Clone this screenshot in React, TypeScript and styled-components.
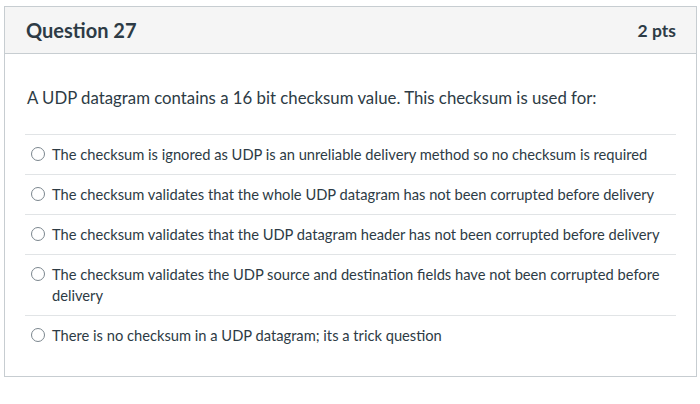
import React from 'react'
import styled, { createGlobalStyle } from 'styled-components'

const GlobalStyle = createGlobalStyle`
  html, body {
    margin: 0;
    padding: 0;
    background: #fff;
  }
  body {
    font-family: Lato, "Open Sans", sans-serif;
    color: #2d3b45;
  }
`

const Page = styled.div`
  padding: 6px 2px 0 4px;
`

const Card = styled.div`
  width: 693px;
  height: 371px;
  border: 1px solid #c7cdd1;
  box-sizing: border-box;
  overflow: hidden;
`

const Header = styled.div`
  display: flex;
  justify-content: space-between;
  align-items: center;
  height: 47px;
  padding: 0 20px 0 21px;
  background: #f5f5f5;
  border-bottom: 1px solid #c7cdd1;
  box-sizing: border-box;

  h2 {
    margin: 0;
    font-size: 20px;
    font-weight: 700;
  }

  span {
    font-size: 17.5px;
    font-weight: 700;
  }
`

const Body = styled.div`
  padding: 32px 20px 0 20px;
`

const QuestionText = styled.p`
  margin: 0 0 24px 2px;
  font-size: 16.8px;
  line-height: 24px;
`

const Answers = styled.ul`
  list-style: none;
  margin: 0;
  padding: 0;
`

const Answer = styled.li`
  display: flex;
  align-items: flex-start;
  border-top: 1px solid #e1e4e6;
  padding: 9px 0 9px 6px;
  font-size: 14.7px;
  line-height: 21px;
`

const Radio = styled.span`
  flex: none;
  width: 12px;
  height: 12px;
  margin: 3px 7px 0 0;
  border: 1.3px solid #7b868e;
  border-radius: 50%;
`

const answers = [
  'The checksum is ignored as UDP is an unreliable delivery method so no checksum is required',
  'The checksum validates that the whole UDP datagram has not been corrupted before delivery',
  'The checksum validates that the UDP datagram header has not been corrupted before delivery',
  'The checksum validates the UDP source and destination ﬁelds have not been corrupted before delivery',
  'There is no checksum in a UDP datagram; its a trick question',
]

const App: React.FC = () => (
  <>
    <GlobalStyle />
    <Page>
      <Card>
        <Header>
          <h2>Question 27</h2>
          <span>2 pts</span>
        </Header>
        <Body>
          <QuestionText>
            A UDP datagram contains a 16 bit checksum value. This checksum is used for:
          </QuestionText>
          <Answers>
            {answers.map((text, i) => (
              <Answer key={i}>
                <Radio />
                <div>{text}</div>
              </Answer>
            ))}
          </Answers>
        </Body>
      </Card>
    </Page>
  </>
)

export default App
